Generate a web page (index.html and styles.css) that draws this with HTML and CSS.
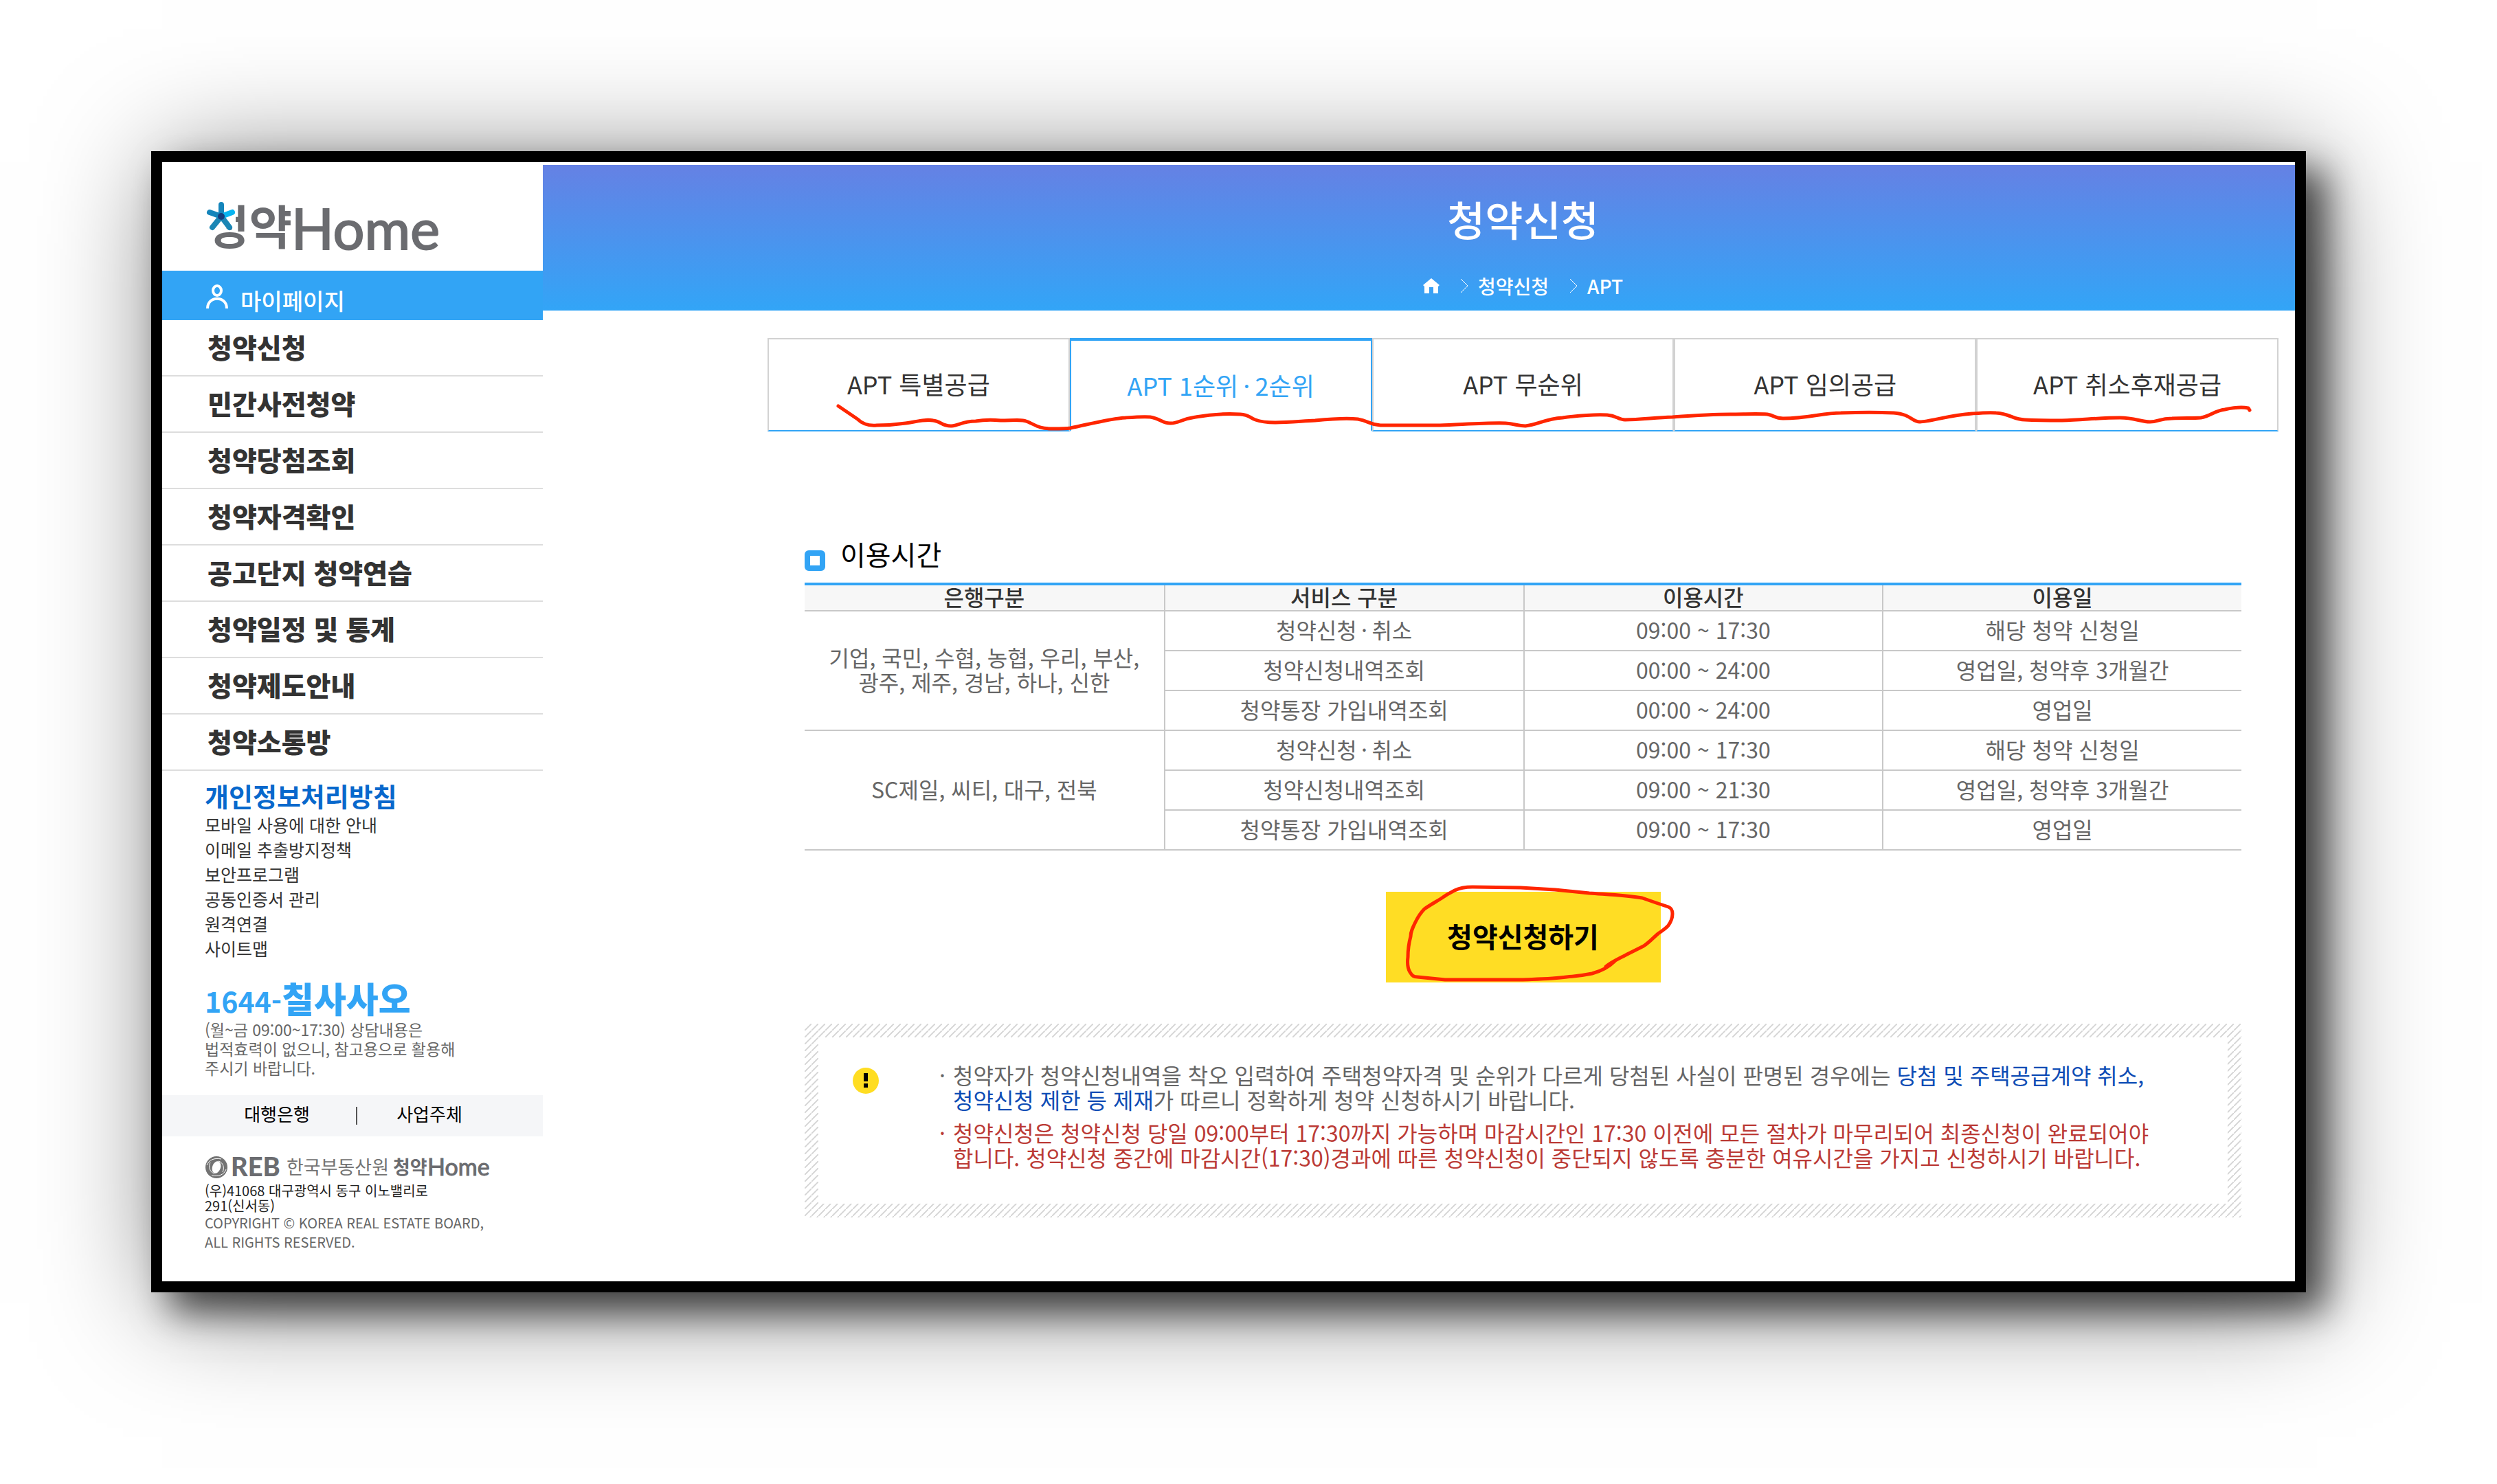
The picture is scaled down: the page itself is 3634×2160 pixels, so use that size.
FILE: index.html
```html
<!DOCTYPE html>
<html lang="ko">
<head>
  <meta charset="UTF-8">
  <title>청약Home - 청약신청</title>
  <link rel="stylesheet" href="styles.css">
</head>
<body>

  <div class="window">

    <aside class="sidebar">
      <a class="logo" href="#">
        <svg width="342" height="76" viewBox="0 0 342 76">
          <text class="logo-ko" x="0" y="62" font-size="68">청약</text>
          <path d="M-2 -4H43V38H28L18 46H-2Z" fill="#fff"/>
          <g stroke-width="8" stroke-linecap="round">
            <path d="M22 21L9 37M22 21L34 37" stroke="#1b86b5"/>
            <path d="M22 21V4M22 21L5 15" stroke="#1585bb"/>
            <path d="M22 21L38 15" stroke="#08b4f0"/>
          </g>
          <circle cx="22" cy="21" r="5" fill="#173c7c"/>
          <text class="logo-en" x="124" y="69" font-size="81">Home</text>
        </svg>
      </a>

      <a class="mypage" href="#">
        <svg width="32" height="36" viewBox="0 0 32 36" fill="none" stroke="#fff" stroke-width="4">
          <ellipse cx="16" cy="9" rx="6" ry="7"/>
          <path d="M2 35C2 16 30 16 30 35"/>
        </svg>
        <span>마이페이지</span>
      </a>

      <nav class="menu">
        <a href="#">청약신청</a>
        <a href="#">민간사전청약</a>
        <a href="#">청약당첨조회</a>
        <a href="#">청약자격확인</a>
        <a href="#">공고단지 청약연습</a>
        <a href="#">청약일정 및 통계</a>
        <a href="#">청약제도안내</a>
        <a href="#">청약소통방</a>
      </nav>

      <div class="links">
        <a class="privacy" href="#">개인정보처리방침</a>
        <a href="#">모바일 사용에 대한 안내</a>
        <a href="#">이메일 추출방지정책</a>
        <a href="#">보안프로그램</a>
        <a href="#">공동인증서 관리</a>
        <a href="#">원격연결</a>
        <a href="#">사이트맵</a>
      </div>

      <div class="call">
        <p class="tel">1644-<strong>칠사사오</strong></p>
        <p>(월~금 09:00~17:30) 상담내용은<br>법적효력이 없으니, 참고용으로 활용해<br>주시기 바랍니다.</p>
      </div>

      <div class="partners">
        <a href="#">대행은행</a>
        <a href="#">사업주체</a>
      </div>

      <footer class="footer">
        <svg width="416" height="34" viewBox="0 0 416 34" fill="#737373">
          <circle cx="17" cy="17" r="16"/>
          <ellipse cx="17" cy="17" rx="6" ry="9" fill="#fff" transform="rotate(20 17 17)"/>
          <path d="M3 14C6 6 14 3 24 5M31 20C28 28 20 31 10 29M20 8C27 10 29 18 26 24M14 26C7 24 5 16 8 10" fill="none" stroke="#fff" stroke-width="1"/>
          <text class="reb" x="38" y="30" font-size="38">REB</text>
          <text class="logo-name" x="119" y="27" font-size="27">한국부동산원</text>
          <text class="logo-ko" x="274" y="27" font-size="27">청약</text>
          <text class="logo-en-s" x="324" y="29" font-size="34">Home</text>
        </svg>
        <address>(우)41068 대구광역시 동구 이노밸리로<br>291(신서동)</address>
        <p>COPYRIGHT © KOREA REAL ESTATE BOARD,<br>ALL RIGHTS RESERVED.</p>
      </footer>
    </aside>

    <main class="main">
      <header class="header">
        <h1>청약신청</h1>
        <div class="crumbs">
          <svg class="home" width="24" height="22" viewBox="0 0 24 22"><path d="M12 0L24 10L22 12V22H15V13H9V22H2V12L0 10Z" fill="#fff"/></svg>
          <svg class="chev" width="12" height="22" viewBox="0 0 12 22"><path d="M1 1L11 11L1 21" fill="none" stroke="#fff"/></svg>
          <a href="#">청약신청</a>
          <svg class="chev" width="12" height="22" viewBox="0 0 12 22"><path d="M1 1L11 11L1 21" fill="none" stroke="#fff"/></svg>
          <a href="#">APT</a>
        </div>
      </header>

      <div class="content">
        <nav class="tabs">
          <a href="#">APT 특별공급</a>
          <a href="#" class="active">APT 1순위&thinsp;·&thinsp;2순위</a>
          <a href="#">APT 무순위</a>
          <a href="#">APT 임의공급</a>
          <a href="#">APT 취소후재공급</a>
          <!-- 빨간 밑줄 -->
          <svg class="mark" viewBox="0 0 2199 136">
            <path d="M103 99L131 118C138 125 148 128 159 127C172 127 187 126 201 124C220 121 230 118 241 120C252 121 255 129 268 128C278 127 285 121 303 121C315 119 327 119 339 120C358 120 371 118 379 122C392 128 396 132 416 132C426 132 434 132 441 131C470 125 500 117 521 116C535 115 548 114 557 115C572 117 575 125 587 124C599 124 602 118 623 115C645 111 668 110 688 111C702 112 701 116 710 119C718 122 728 123 739 123C758 123 777 121 797 120C817 118 843 116 859 118C876 121 876 126 892 127H979C1010 126 1050 123 1074 124C1088 125 1092 128 1103 128C1122 126 1130 118 1157 116C1180 113 1205 111 1222 112C1236 113 1238 119 1248 119C1270 119 1290 116 1317 115C1345 113 1375 111 1401 111C1420 111 1440 110 1455 111C1467 113 1465 117 1478 117C1515 117 1535 109 1562 109C1590 108 1618 108 1639 109C1665 111 1665 122 1677 122C1692 122 1720 112 1753 110C1766 109 1778 108 1788 109C1808 110 1813 119 1830 119C1848 120 1865 120 1884 120C1915 119 1940 116 1968 116C1990 116 1998 122 2012 122C2024 122 2026 117 2044 117C2060 116 2074 117 2086 116C2100 114 2105 106 2121 104C2135 101 2145 100 2155 102L2157 105"/>
          </svg>
        </nav>

        <section class="section">
          <h2>이용시간</h2>
          <table class="hours">
            <thead>
              <tr><th>은행구분</th><th>서비스 구분</th><th>이용시간</th><th>이용일</th></tr>
            </thead>
            <tbody>
              <tr><td rowspan="3">기업, 국민, 수협, 농협, 우리, 부산,<br>광주, 제주, 경남, 하나, 신한</td><td>청약신청&thinsp;·&thinsp;취소</td><td>09:00 ~ 17:30</td><td>해당 청약 신청일</td></tr>
              <tr><td>청약신청내역조회</td><td>00:00 ~ 24:00</td><td>영업일, 청약후 3개월간</td></tr>
              <tr><td>청약통장 가입내역조회</td><td>00:00 ~ 24:00</td><td>영업일</td></tr>
              <tr><td rowspan="3">SC제일, 씨티, 대구, 전북</td><td>청약신청&thinsp;·&thinsp;취소</td><td>09:00 ~ 17:30</td><td>해당 청약 신청일</td></tr>
              <tr><td>청약신청내역조회</td><td>09:00 ~ 21:30</td><td>영업일, 청약후 3개월간</td></tr>
              <tr><td>청약통장 가입내역조회</td><td>09:00 ~ 17:30</td><td>영업일</td></tr>
            </tbody>
          </table>

          <div class="apply">
            <button type="button">청약신청하기</button>
            <svg class="mark" viewBox="0 0 400 132">
              <path d="M320 109C328 102 340 97 353 90L375 79C383 74 390 66 396 61C403 56 408 53 411 49C416 42 417 38 417 32C417 27 416 24 411 22L393 16L373 9C348 5 322 4 296 2L246 -3L196 -6L126 -7C114 -7 106 -5 100 -2C94 1 87 5 80 10C72 15 63 20 56 25C50 31 46 38 43 44C39 52 36 58 36 65C33 76 32 85 32 95C31 103 32 112 35 117C38 122 40 124 46 124L86 128H196C220 127 242 127 263 124C278 123 290 121 300 119C311 116 323 111 333 101"/>
            </svg>
          </div>

          <div class="notice">
            <div class="notice-in">
              <svg class="warn" width="38" height="38" viewBox="0 0 38 38"><circle cx="19" cy="19" r="19" fill="#ffdd22"/><path d="M16 8H22V20H16ZM16 23H22V29H16Z"/></svg>
              <ul>
                <li>청약자가 청약신청내역을 착오 입력하여 주택청약자격 및 순위가 다르게 당첨된 사실이 판명된 경우에는 <em>당첨 및 주택공급계약 취소,<br>청약신청 제한 등 제재</em>가 따르니 정확하게 청약 신청하시기 바랍니다.</li>
                <li class="red">청약신청은 청약신청 당일 09:00부터 17:30까지 가능하며 마감시간인 17:30 이전에 모든 절차가 마무리되어 최종신청이 완료되어야<br>합니다. 청약신청 중간에 마감시간(17:30)경과에 따른 청약신청이 중단되지 않도록 충분한 여유시간을 가지고 신청하시기 바랍니다.</li>
              </ul>
            </div>
          </div>
        </section>
      </div>
    </main>

  </div>

</body>
</html>
```

FILE: styles.css
```css
* {
  box-sizing: border-box;
}

body {
  margin: 0;
  padding: 220px 278px 278px 220px;
  background-color: #fff;
  color: #333;
  font-family: "Noto Sans CJK KR", sans-serif;
}

a {
  color: inherit;
  text-decoration: none;
}

h1, h2, p, ul {
  margin: 0;
  padding: 0;
}

svg {
  display: block;
  overflow: visible;
}

.window {
  display: flex;
  border: 16px solid #000;
  background-color: #fff;
  box-shadow: 28px 28px 50px rgba(0, 0, 0, 0.65), 16px 16px 160px rgba(0, 0, 0, 0.5);
}

/* 왼쪽 메뉴 */
.sidebar {
  width: 554px;
  flex-shrink: 0;
}

.logo {
  display: block;
  height: 158px;
  padding: 58px 64px 0;
}

.logo-ko {
  font-weight: 700;
  fill: #6b6c70;
}

.logo-en, .logo-en-s, .reb {
  font-family: Lato, sans-serif;
  fill: #6b6c70;
}

.logo-en {
  stroke: #6b6c70;
  stroke-width: 2px;
}

.logo-en-s {
  stroke: #6b6c70;
  stroke-width: 1px;
}

.reb {
  font-weight: 900;
}

.mypage {
  display: flex;
  align-items: center;
  gap: 18px;
  height: 72px;
  padding: 4px 64px 0;
  background-color: #32a4f5;
  color: #fff;
  font-size: 33px;
  font-weight: 500;
}

.mypage span {
  padding-top: 10px;
}

.menu a {
  display: block;
  height: 82px;
  padding-left: 66px;
  border-bottom: 2px solid #ddd;
  font-size: 39px;
  font-weight: 900;
  line-height: 76px;
}

.links {
  padding: 14px 60px 0 62px;
}

.links a {
  display: block;
  font-size: 25px;
  line-height: 36px;
}

.links .privacy {
  margin-bottom: 2px;
  color: #0868cc;
  font-size: 38px;
  font-weight: 700;
  line-height: 44px;
}

.call {
  padding: 26px 60px 0 62px;
  color: #666;
  font-size: 23px;
  line-height: 28px;
}

.tel {
  color: #32a4f5;
  font-size: 41px;
  font-weight: 700;
  line-height: 56px;
}

.tel strong {
  font-size: 51px;
}

.partners {
  display: flex;
  height: 60px;
  margin-top: 26px;
  padding: 0 54px 0 56px;
  background-color: #f5f6f8;
  color: #000;
  font-size: 26px;
  line-height: 54px;
  text-align: center;
}

.partners a {
  flex: 1;
}

.partners a + a {
  background: linear-gradient(#555, #555) 4px center / 2px 26px no-repeat;
}

.footer {
  padding: 28px 40px 43px 62px;
}

.footer address {
  margin-top: 6px;
  color: #222;
  font-size: 20px;
  font-style: normal;
  line-height: 22px;
}

.footer p {
  color: #666;
  font-size: 20px;
  line-height: 28px;
}

/* 본문 */
.main {
  flex: 1;
  padding-top: 4px;
}

.header {
  height: 212px;
  padding: 30px 24px 0 327px;
  background: linear-gradient(#6581e4, #32a5f7);
  color: #fff;
  text-align: center;
}

.header h1 {
  font-size: 60px;
  font-weight: 500;
  line-height: 96px;
}

.crumbs {
  display: flex;
  justify-content: center;
  align-items: center;
  height: 40px;
  margin-top: 30px;
  font-size: 28px;
  font-weight: 500;
}

.chev {
  margin: 0 14px 0 30px;
}

.content {
  padding: 40px 24px 0 327px;
}

.tabs {
  position: relative;
  display: flex;
}

.tabs a {
  flex: 1;
  height: 136px;
  border: 2px solid #d2d2d2;
  border-bottom-color: #32a4f5;
  font-size: 36px;
  line-height: 128px;
  text-align: center;
}

.tabs .active {
  border-color: #32a4f5;
  border-top-width: 4px;
  border-bottom-color: #fff;
  color: #32a4f5;
}

.mark {
  position: absolute;
  top: 0;
  left: 0;
  width: 100%;
  height: 100%;
  fill: none;
  stroke: #ff2600;
  stroke-width: 5px;
  stroke-linecap: round;
  stroke-linejoin: round;
  pointer-events: none;
}

.section {
  padding: 152px 54px 0;
}

.section h2 {
  display: flex;
  align-items: center;
  gap: 22px;
  height: 68px;
  padding-bottom: 16px;
  color: #000;
  font-size: 40px;
  font-weight: 400;
  line-height: 52px;
}

.section h2::before {
  content: "";
  width: 14px;
  height: 14px;
  margin-top: 20px;
  border: 8px solid #32a4f5;
  border-radius: 6px;
}

.hours {
  width: 100%;
  border-top: 4px solid #32a4f5;
  border-spacing: 0;
  table-layout: fixed;
  color: #666;
  font-size: 32px;
  line-height: 36px;
  text-align: center;
}

.hours th {
  padding: 0 0 4px;
  border-bottom: 2px solid #c8c8c8;
  background-color: #f7f7f7;
  color: #333;
  font-weight: 500;
  line-height: 32px;
}

.hours td {
  height: 58px;
  padding: 0 0 4px;
  border-bottom: 2px solid #c8c8c8;
}

.hours th + th,
.hours td + td,
.hours tr td:first-child:not([rowspan]) {
  border-left: 2px solid #c8c8c8;
}

.apply {
  position: relative;
  width: 400px;
  margin: 60px auto;
}

.apply button {
  display: block;
  width: 100%;
  height: 132px;
  padding: 0 0 4px;
  border: none;
  background-color: #ffdd24;
  color: #000;
  font-family: inherit;
  font-size: 40px;
  font-weight: 700;
  cursor: pointer;
}

.notice {
  padding: 20px;
  background: linear-gradient(135deg, #fff 42%, #d4d4d4 46%, #d4d4d4 54%, #fff 58%) 0 0 / 10px 10px;
}

.notice-in {
  display: flex;
  align-items: flex-start;
  padding: 36px 50px 38px;
  background-color: #fff;
}

.warn {
  margin: 8px 88px 0 0;
}

.notice ul {
  list-style: none;
  color: #666;
  font-size: 32px;
  line-height: 36px;
}

.notice li {
  position: relative;
  padding-left: 20px;
  margin-bottom: 12px;
}

.notice li::before {
  content: "·";
  position: absolute;
  left: 0;
}

.notice em {
  color: #0d4cb5;
  font-style: normal;
}

.notice .red {
  color: #bb3a35;
}
```
